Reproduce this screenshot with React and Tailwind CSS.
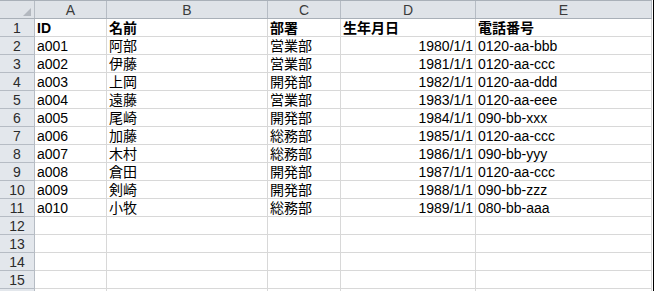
import React from 'react';

const rows = [
    ['ID', '名前', '部署', '生年月日', '電話番号'],
    ['a001', '阿部', '営業部', '1980/1/1', '0120-aa-bbb'],
    ['a002', '伊藤', '営業部', '1981/1/1', '0120-aa-ccc'],
    ['a003', '上岡', '開発部', '1982/1/1', '0120-aa-ddd'],
    ['a004', '遠藤', '営業部', '1983/1/1', '0120-aa-eee'],
    ['a005', '尾崎', '開発部', '1984/1/1', '090-bb-xxx'],
    ['a006', '加藤', '総務部', '1985/1/1', '0120-aa-ccc'],
    ['a007', '木村', '総務部', '1986/1/1', '090-bb-yyy'],
    ['a008', '倉田', '開発部', '1987/1/1', '0120-aa-ccc'],
    ['a009', '剣崎', '開発部', '1988/1/1', '090-bb-zzz'],
    ['a010', '小牧', '総務部', '1989/1/1', '080-bb-aaa'],
];

const widths = ['w-[72px]', 'w-[161px]', 'w-[73px]', 'w-[135px]', 'w-[176px]'];
const letters = ['A', 'B', 'C', 'D', 'E'];

const App = () => {
    const all = Array.from({ length: 16 }, (_, i) => rows[i] || ['', '', '', '', '']);

    return (
        <div className="w-[654px] h-[291px] overflow-hidden bg-white flex font-['Liberation_Sans','Noto_Sans_CJK_JP',sans-serif] text-[14px] text-black">
            <div className="w-[652px] flex flex-col">
                {/* column header */}
                <div className="flex h-[19px] shrink-0 border-t border-b border-[#a9b0b8] bg-[#dfe3e8]">
                    <div className="w-[35px] shrink-0 border-r border-[#b6bcc4] flex items-end justify-end pr-[3px] pb-[2px]">
                        <svg width="8" height="8" viewBox="0 0 8 8">
                            <polygon points="8,0 8,8 0,8" fill="#b3b8bf" />
                        </svg>
                    </div>
                    {letters.map((l, i) => (
                        <div key={l} className={`${widths[i]} shrink-0 border-r border-[#b6bcc4] flex items-center justify-center text-[#3b3b3b] leading-none`}>
                            {l}
                        </div>
                    ))}
                </div>

                {all.map((r, idx) => (
                    <div key={idx} className="flex h-[18px] shrink-0">
                        <div className="w-[35px] shrink-0 bg-[#e3e7ec] border-r border-b border-[#b6bcc4] flex items-center justify-center text-[#2b2b2b] leading-none">
                            {idx < 15 ? idx + 1 : ''}
                        </div>
                        {r.map((c, ci) => (
                            <div
                                key={ci}
                                className={`${widths[ci]} shrink-0 border-r border-b border-[#d8d8d8] flex items-center px-[2px] leading-none whitespace-nowrap ${ci === 3 && idx > 0 ? 'justify-end' : ''} ${idx === 0 ? 'font-bold' : ''}`}
                            >
                                {c}
                            </div>
                        ))}
                    </div>
                ))}
            </div>
            <div className="w-px bg-white"></div>
            <div className="w-px bg-black"></div>
        </div>
    );
};

export default App;
